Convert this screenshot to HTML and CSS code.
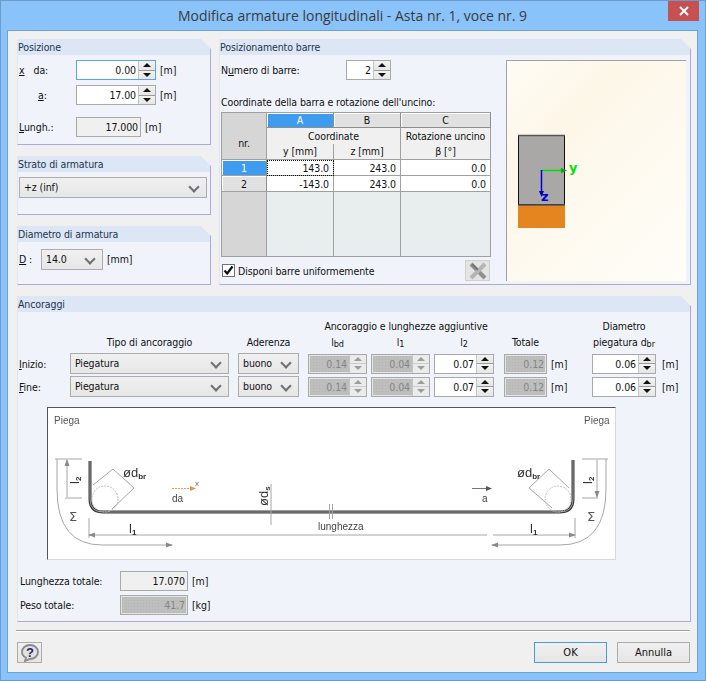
FILE: index.html
```html
<!DOCTYPE html>
<html lang="it">
<head>
<meta charset="utf-8">
<title>Modifica armature longitudinali</title>
<link rel="stylesheet" href="styles.css">
</head>
<body>
<div class="window">
  <header class="titlebar">
    <span class="title">Modifica armature longitudinali - Asta nr. 1, voce nr. 9</span>
    <span class="close"><svg width="10" height="10" viewBox="0 0 10 10"><path d="M1 1L9 9M9 1L1 9" stroke="#fff" stroke-width="2"/></svg></span>
  </header>
  <main class="client">
    <div class="top">
      <div class="leftcol">
        <section class="panel p-pos">
          <h2 class="phead">Posizione</h2>
          <div class="pbody pos-body">
            <div class="row r-da">
              <span class="lab lab-x"><u>x</u><span class="da">da:</span></span>
              <div class="field spin w80 focus"><span class="val">0.00</span><span class="btns"><i class="up"></i><i class="dn"></i></span></div>
              <span class="unit">[m]</span>
            </div>
            <div class="row r-a">
              <span class="lab lab-a"><u>a</u>:</span>
              <div class="field spin w80"><span class="val">17.00</span><span class="btns"><i class="up"></i><i class="dn"></i></span></div>
              <span class="unit">[m]</span>
            </div>
            <div class="row r-l">
              <span class="lab"><u>L</u>ungh.:</span>
              <div class="field ro w65"><span class="val">17.000</span></div>
              <span class="unit">[m]</span>
            </div>
          </div>
        </section>
        <section class="panel p-small">
          <h2 class="phead">Strato di armatura</h2>
          <div class="pbody strato-body">
            <div class="select w188">+z (inf)</div>
          </div>
        </section>
        <section class="panel p-small">
          <h2 class="phead">Diametro di armatura</h2>
          <div class="pbody diam-body">
            <span class="lab lab-d"><u>D</u> :</span>
            <div class="select w62">14.0</div>
            <span class="unit">[mm]</span>
          </div>
        </section>
      </div>
      <section class="panel p-bars">
        <h2 class="phead">Posizionamento barre</h2>
        <div class="pbody bars-body">
          <div class="bars-main">
            <div class="row r-num">
              <span class="lab lab-num">N<u>u</u>mero di barre:</span>
              <div class="field spin w45"><span class="val">2</span><span class="btns"><i class="up"></i><i class="dn"></i></span></div>
            </div>
            <p class="coord-label">Coordinate della barra e rotazione dell'uncino:</p>
            <table class="grid">
              <colgroup><col class="c-nr"><col class="c-ab"><col class="c-ab"><col class="c-c"></colgroup>
              <tr class="h-letters"><th class="corner"></th><th class="hbtn sel">A</th><th class="hbtn">B</th><th class="hbtn">C</th></tr>
              <tr class="h-sub"><th class="corner nr" rowspan="2">nr.</th><th colspan="2" class="h-top">Coordinate</th><th class="h-top">Rotazione uncino</th></tr>
              <tr class="h-sub"><th class="h-bot">y [mm]</th><th class="h-bot">z [mm]</th><th class="h-bot">β [°]</th></tr>
              <tr class="data"><th class="rbtn sel">1</th><td class="cur">143.0</td><td>243.0</td><td>0.0</td></tr>
              <tr class="data"><th class="rbtn">2</th><td>-143.0</td><td>243.0</td><td>0.0</td></tr>
              <tr class="empty"><th class="corner"></th><td></td><td></td><td></td></tr>
            </table>
            <div class="check-row">
              <label class="check"><span class="box"><svg width="11" height="11" viewBox="0 0 11 11"><path d="M1.5 5.5L4.2 8.5L9.5 1.5" fill="none" stroke="#111" stroke-width="2.2"/></svg></span>Disponi barre uniformemente</label>
              <span class="xbtn"><svg width="18" height="18" viewBox="0 0 18 18"><path d="M2 2L16 16" stroke="#8f8f8f" stroke-width="4"/><path d="M16 2L2 16" stroke="#b5b5b5" stroke-width="4"/><path d="M3 2L9 8" stroke="#6f6f6f" stroke-width="1.5"/></svg></span>
            </div>
          </div>
          <div class="preview">
            <svg width="180" height="221" viewBox="506 60 180 221">
              <rect x="518" y="205" width="47" height="23" fill="#e5851f"/>
              <rect x="518.5" y="135.5" width="46" height="69" fill="#a9a8a6" stroke="#111"/>
              <path d="M518 135.500H565M518 205H565" stroke="#555" stroke-width="1.500"/>
              <path d="M541 170.500H565" stroke="#00e000" stroke-width="1.500"/>
              <path d="M561 168L567 170.500L561 173Z" fill="#00b000"/>
              <path d="M541.500 170V194" stroke="#0000e0" stroke-width="1.500"/>
              <path d="M539 191L541.500 197L544 191Z" fill="#0000a0"/>
              <text x="569" y="172" class="axis ay">y</text>
              <text x="541" y="201" class="axis az">z</text>
            </svg>
          </div>
        </div>
      </section>
    </div>
    <section class="panel p-anch">
      <h2 class="phead">Ancoraggi</h2>
      <div class="pbody anch-body">
        <div class="agrid">
          <span class="h1 span3 g-extra">Ancoraggio e lunghezze aggiuntive</span>
          <span class="h1 g-diam">Diametro</span>
          <span class="h2 g-tipo">Tipo di ancoraggio</span>
          <span class="h2 g-ader">Aderenza</span>
          <span class="h2 g-lbd">l<small>bd</small></span>
          <span class="h2 g-l1">l<small>1</small></span>
          <span class="h2 g-l2">l<small>2</small></span>
          <span class="h2 g-tot">Totale</span>
          <span class="h2 g-dbr">piegatura d<small>br</small></span>

          <span class="lab r3"><u>I</u>nizio:</span>
          <div class="select w159 r3">Piegatura</div>
          <div class="select w61 r3">buono</div>
          <div class="field spin dis w59 r3"><span class="val">0.14</span><span class="btns"><i class="up"></i><i class="dn"></i></span></div>
          <div class="field spin dis w59 r3"><span class="val">0.04</span><span class="btns"><i class="up"></i><i class="dn"></i></span></div>
          <div class="field spin w60 r3"><span class="val">0.07</span><span class="btns"><i class="up"></i><i class="dn"></i></span></div>
          <div class="cellrow r3"><div class="field dis w43"><span class="val">0.12</span></div><span class="unit">[m]</span></div>
          <div class="cellrow r3"><div class="field spin w64"><span class="val">0.06</span><span class="btns"><i class="up"></i><i class="dn"></i></span></div><span class="unit u6">[m]</span></div>

          <span class="lab r4"><u>F</u>ine:</span>
          <div class="select w159 r4">Piegatura</div>
          <div class="select w61 r4">buono</div>
          <div class="field spin dis w59 r4"><span class="val">0.14</span><span class="btns"><i class="up"></i><i class="dn"></i></span></div>
          <div class="field spin dis w59 r4"><span class="val">0.04</span><span class="btns"><i class="up"></i><i class="dn"></i></span></div>
          <div class="field spin w60 r4"><span class="val">0.07</span><span class="btns"><i class="up"></i><i class="dn"></i></span></div>
          <div class="cellrow r4"><div class="field dis w43"><span class="val">0.12</span></div><span class="unit">[m]</span></div>
          <div class="cellrow r4"><div class="field spin w64"><span class="val">0.06</span><span class="btns"><i class="up"></i><i class="dn"></i></span></div><span class="unit u6">[m]</span></div>
        </div>

        <div class="diagram">
          <svg width="569" height="153" viewBox="47 406 569 153">
            <defs>
              <marker id="ah" markerWidth="7" markerHeight="6" refX="6" refY="3" orient="auto-start-reverse"><path d="M0 0.500L7 3L0 5.500Z" fill="#8a8a8a"/></marker>
              <marker id="oh" markerWidth="6" markerHeight="6" refX="5" refY="3" orient="auto"><path d="M0 0.500L6 3L0 5.500Z" fill="#e0935a"/></marker>
              <marker id="bh" markerWidth="6" markerHeight="6" refX="5" refY="3" orient="auto"><path d="M0 0.500L6 3L0 5.500Z" fill="#555"/></marker>
            </defs>
            <path class="bar" d="M90 460V498Q90 511 103 511H560Q573 511 573 498V459"/>
            <path class="bar-in" d="M90 460V498Q90 511 103 511H560Q573 511 573 498V459"/>
            <g class="dim">
              <path d="M55 458H82M65 497H82M582 458H608M582 497H598"/>
              <path d="M67 459V496M597 459V496" marker-start="url(#ah)" marker-end="url(#ah)"/>
              <path d="M57 458V488Q57 544 102 544H172" marker-end="url(#ah)"/>
              <path d="M606 458V488Q606 544 560 544H492" marker-end="url(#ah)"/>
              <path d="M89 517V537M575 517V537"/>
              <path d="M89 534H173M493 534H575" marker-start="url(#ah)" marker-end="url(#ah)"/>
              <path d="M173 534H487"/>
              <path d="M93 484L113 468L134 487L112 508"/>
              <path d="M569 487L549 468L529 487L552 507"/>
              <circle cx="105" cy="498" r="13" class="dash"/>
              <circle cx="558" cy="498" r="13" class="dash"/>
              <path d="M271 483V524M329.500 503V518M332.500 503V518"/>
            </g>
            <path d="M172 487.500H195" class="orange" marker-end="url(#oh)"/>
            <path d="M472 487.500H491" class="darkline" marker-end="url(#bh)"/>
            <text class="d-lab" x="54" y="423">Piega</text>
            <text class="d-lab" x="584" y="423">Piega</text>
            <text class="d-txt" x="172" y="501">da</text>
            <text class="d-sm" x="195" y="485">x</text>
            <text class="d-txt" x="482" y="501">a</text>
            <text class="d-txt" x="318" y="529">lunghezza</text>
            <text class="d-big" x="123" y="476">ød<tspan class="d-s" dy="2">br</tspan></text>
            <text class="d-big" x="517" y="476">ød<tspan class="d-s" dy="2">br</tspan></text>
            <text class="d-big" x="129" y="532">l<tspan class="d-s" dy="2">1</tspan></text>
            <text class="d-big" x="530" y="532">l<tspan class="d-s" dy="2">1</tspan></text>
            <text class="d-big" transform="translate(79 483) rotate(-90)">l<tspan class="d-s" dy="2">2</tspan></text>
            <text class="d-big" transform="translate(592 483) rotate(-90)">l<tspan class="d-s" dy="2">2</tspan></text>
            <text class="d-big" transform="translate(268 505) rotate(-90)">ød<tspan class="d-s" dy="2">s</tspan></text>
            <text class="d-sig" x="69" y="520">Σ</text>
            <text class="d-sig" x="587" y="520">Σ</text>
          </svg>
        </div>

        <div class="totals">
          <div class="row r-tot"><span class="lab lab-t">Lunghezza totale:</span><div class="field ro w68"><span class="val">17.070</span></div><span class="unit">[m]</span></div>
          <div class="row r-tot"><span class="lab lab-t">Peso totale:</span><div class="field dis w68"><span class="val">41.7</span></div><span class="unit">[kg]</span></div>
        </div>
      </div>
    </section>
    <hr class="sep">
    <footer class="actions">
      <button class="btn help" type="button" aria-label="Aiuto"><svg width="20" height="18" viewBox="0 0 20 18"><path d="M10 1C14.500 1 18 4 18 8C18 12 14.500 15 10 15L5 17L6 13.800C3.500 12.500 2 10.500 2 8C2 4 5.500 1 10 1Z" fill="#e2e2e2" stroke="#8a8a8a" stroke-width="1.800"/><text x="10" y="13" class="q">?</text></svg></button>
      <div class="spacer"></div>
      <button class="btn ok" type="button">OK</button>
      <button class="btn" type="button">Annulla</button>
    </footer>
  </main>
</div>
</body>
</html>
```

FILE: styles.css
```css
* { box-sizing: border-box; }
html, body { margin: 0; padding: 0; }
body { width: 706px; height: 681px; overflow: hidden; font: 10.5px/14px "DejaVu Sans Condensed", "DejaVu Sans", sans-serif; letter-spacing: -0.1px; color: #111; }
.window { width: 706px; height: 681px; background: #8ac3f9; border: 1px solid #6b9ccb; padding: 0 7px 7px 6px; display: flex; flex-direction: column; }
.titlebar { height: 29px; flex: none; display: flex; justify-content: center; align-items: center; position: relative; }
.title { font: 14px/20px "Open Sans", "Noto Sans", sans-serif; letter-spacing: 0; color: #3a3a3a; padding-top: 1px; }
.close { position: absolute; right: -1px; top: 0; width: 31px; height: 20px; background: #c75050; display: flex; align-items: center; justify-content: center; }
.client { flex: 1; background: #f0f0f0; border: 1px solid #6ea3d6; padding: 8px 6px 8px 9px; display: flex; flex-direction: column; }
.top { display: flex; gap: 8px; height: 246px; flex: none; }
.leftcol { width: 194px; display: flex; flex-direction: column; gap: 11px; }

.panel { display: flex; flex-direction: column; background: #f0f4fa; border-right: 1px solid #aaa8e8; border-bottom: 1px solid #aaa8e8; border-left: 1px solid #dfe7f4; clip-path: polygon(0 0, calc(100% - 10px) 0, 100% 10px, 100% 100%, 0 100%); }
.phead { margin: 0; height: 16px; flex: none; background: #dce6f4; font: 10.5px/16px "DejaVu Sans Condensed", "DejaVu Sans", sans-serif; color: #1e3550; white-space: nowrap; }
.pbody { flex: 1; min-height: 0; }
.p-pos { height: 106px; }
.p-small { height: 59px; }
.p-bars { width: 472px; }
.p-anch { height: 326px; margin-top: 11px; flex: none; }

.row { display: flex; align-items: center; }
.lab { display: inline-block; white-space: nowrap; }
.unit { white-space: nowrap; margin-left: 4px; }
.pos-body { padding: 5px 0 0 1px; }
.pos-body .lab { width: 57px; }
.r-da, .r-a { height: 20px; }
.r-a { margin-top: 5px; }
.r-l { height: 20px; margin-top: 12px; }
.lab-x .da { margin-left: 9px; }
.lab-a { padding-left: 19px; }
.strato-body { padding: 5px 0 0 1px; }
.diam-body { padding: 7px 0 0 1px; display: flex; align-items: flex-start; line-height: 21px; }
.lab-d { width: 22px; }

.field { height: 20px; border: 1px solid #a9a9a9; background: #fff; display: flex; align-items: stretch; flex: none; }
.val { flex: 1; text-align: right; padding-right: 2px; line-height: 18px; white-space: nowrap; }
.focus { border-color: #5aa4ea; }
.ro { background: #f0f0f0; }
.dis { background-color: #bebebe; background-image: radial-gradient(#b4b4b4 0.6px, transparent 0.8px); background-size: 3px 3px; color: #858585; box-shadow: inset 0 0 0 1px #e4e4e4; }
.btns { width: 17px; display: flex; flex-direction: column; border-left: 1px solid #c4c4c4; background: #f0f0f0; }
.btns i { flex: 1; display: flex; align-items: center; justify-content: center; background: linear-gradient(#f2f2f2, #e6e6e6); }
.btns .up { border-bottom: 1px solid #9a9a9a; }
.btns i::before { content: ""; border-left: 4px solid transparent; border-right: 4px solid transparent; }
.btns .up::before { border-bottom: 4px solid #111; }
.btns .dn::before { border-top: 4px solid #111; }
.dis .btns { background: #e8e8e8; }
.dis .btns i { background: #ebebeb; }
.dis .btns .up { border-bottom-color: #ccc; }
.dis .btns .up::before { border-bottom-color: #9c9c9c; }
.dis .btns .dn::before { border-top-color: #9c9c9c; }
.w80 { width: 80px; }
.w65 { width: 65px; }
.w45 { width: 45px; }
.w59 { width: 59px; }
.w60 { width: 60px; }
.w43 { width: 43px; }
.w64 { width: 64px; }
.w68 { width: 68px; }

.select { height: 21px; border: 1px solid #acacac; background: linear-gradient(#f0f0f0, #e6e6e6); line-height: 19px; padding-left: 4px; position: relative; flex: none; white-space: nowrap; }
.select::after { content: ""; position: absolute; right: 8px; top: 5px; width: 6px; height: 6px; border-right: 2px solid #707070; border-bottom: 2px solid #707070; transform: rotate(45deg); }
.w188 { width: 188px; }
.w62 { width: 62px; }
.w159 { width: 159px; }
.w61 { width: 61px; }

.bars-body { display: flex; padding: 5px 0 0 1px; }
.bars-main { width: 270px; }
.r-num { height: 20px; }
.lab-num { width: 125px; }
.coord-label { margin: 15px 0 3px; line-height: 14px; white-space: nowrap; }
.grid { table-layout: fixed; width: 269px; border-collapse: collapse; border: 1px solid #a0a0a0; }
.c-nr { width: 45px; }
.c-ab { width: 67px; }
.c-c { width: 90px; }
.grid th, .grid td { padding: 0; font-weight: normal; }
.h-letters { height: 15px; }
.h-letters th { line-height: 13px; }
.h-sub { height: 16px; }
.corner { background: #d6d6d6; border-right: 1px solid #a0a0a0; }
.nr { border-bottom: 1px solid #a0a0a0; }
.hbtn { background: #e1e1e1; border-right: 1px solid #8e8e8e; border-bottom: 1px solid #8e8e8e; box-shadow: inset 1px 1px 0 #fff; }
.hbtn.sel, .rbtn.sel { background: #3d9bf0; color: #fff; box-shadow: inset 1px 1px 0 #fff; }
.h-top, .h-bot { background: #f0f0f0; border-right: 1px solid #a0a0a0; line-height: 14px; }
.h-bot { border-bottom: 1px solid #a0a0a0; }
.data { height: 16px; }
.data td { background: #fff; text-align: right; padding-right: 4px; border-right: 1px solid #a0a0a0; border-bottom: 1px solid #a0a0a0; line-height: 14px; }
.rbtn { background: #e1e1e1; border-right: 1px solid #8e8e8e; border-bottom: 1px solid #a0a0a0; box-shadow: inset 1px 1px 0 #fff; }
.cur { outline: 1px dotted #111; outline-offset: -1px; }
.empty { height: 65px; }
.empty td { background: #e8eeee; border-right: 1px solid #a0a0a0; }
.check-row { display: flex; align-items: center; height: 27px; position: relative; }
.check { display: flex; align-items: center; white-space: nowrap; flex: 1; }
.box { width: 13px; height: 13px; border: 1px solid #707070; background: #fff; margin: 0 3px 0 1px; display: flex; align-items: center; justify-content: center; }
.xbtn { width: 25px; height: 21px; background: #e4e4e4; border: 1px solid #d0d0d0; display: flex; align-items: center; justify-content: center; margin-right: 1px; }
.preview { width: 180px; height: 221px; margin-left: 15px; border-top: 1px solid #a0a0a0; border-left: 1px solid #a0a0a0; background: linear-gradient(135deg, #fffcf4 0%, #fdf7e8 30%, #fefaf0 60%, #fffdf9 100%); overflow: hidden; flex: none; }
.preview svg { display: block; margin: -1px 0 0 -1px; }
.axis { font: bold 13px "DejaVu Sans", sans-serif; }
.ay { fill: #00e000; }
.az { fill: #0000e0; }

.anch-body { padding: 7px 0 0 1px; }
.agrid { display: grid; grid-template-columns: 51px 168px 70px 63px 63px 70px 88px 98px; grid-template-rows: 14px 18px 25px 21px; align-items: center; }
.agrid .h1, .agrid .h2 { text-align: center; white-space: nowrap; }
.agrid small { font-size: 9px; position: relative; top: 1px; }
.r3 { grid-row: 3; }
.r4 { grid-row: 4; }
.span3 { grid-column: 4 / 7; grid-row: 1; }
.g-diam { grid-column: 8; grid-row: 1; justify-self: start; width: 64px; }
.g-tipo { grid-column: 2; grid-row: 2; justify-self: start; width: 159px; }
.g-ader { grid-column: 3; grid-row: 2; justify-self: start; width: 61px; }
.g-lbd { grid-column: 4; grid-row: 2; justify-self: start; width: 59px; }
.g-l1 { grid-column: 5; grid-row: 2; justify-self: start; width: 59px; }
.g-l2 { grid-column: 6; grid-row: 2; justify-self: start; width: 60px; }
.g-tot { grid-column: 7; grid-row: 2; justify-self: start; width: 43px; }
.g-dbr { grid-column: 8; grid-row: 2; justify-self: start; width: 64px; }
.cellrow { display: flex; align-items: center; }
.u6 { margin-left: 6px; }

.diagram { width: 569px; height: 153px; margin: 10px 0 0 28px; border-top: 1px solid #555; border-left: 1px solid #555; border-right: 1px solid #d8d8d8; border-bottom: 1px solid #d8d8d8; background: #fff; overflow: hidden; }
.diagram svg { display: block; margin: -1px 0 0 -1px; filter: blur(0.3px); letter-spacing: 0; }
.bar { fill: none; stroke: #3a3a3a; stroke-width: 3; }
.bar-in { fill: none; stroke: #9a9a9a; stroke-width: 1; }
.dim path { fill: none; stroke: #a6a6a6; stroke-width: 1; }
.dash { fill: none; stroke: #bdbdbd; stroke-width: 1; stroke-dasharray: 2 1; }
.orange { stroke: #ef9a5c; stroke-width: 1; stroke-dasharray: 2 1; fill: none; }
.darkline { stroke: #777; stroke-width: 1; fill: none; }
.d-lab { font: 10px "Liberation Sans", sans-serif; fill: #555; }
.d-txt { font: 10px "Liberation Sans", sans-serif; fill: #444; }
.d-sm { font: 8px "Liberation Sans", sans-serif; fill: #666; }
.d-big { font: 13px "Liberation Sans", sans-serif; fill: #333; }
.d-s { font: bold 8px "Liberation Sans", sans-serif; }
.d-sig { font: 13px "DejaVu Sans", sans-serif; fill: #555; }

.totals { padding: 11px 0 0 1px; }
.r-tot { height: 20px; margin-bottom: 4px; }
.lab-t { width: 100px; }

.sep { margin: 8px 0 0 -1px; width: 674px; height: 2px; border: 0; border-top: 1px solid #a0a0a0; border-bottom: 1px solid #fff; flex: none; }
.actions { display: flex; margin: 10px 1px 0 0; gap: 10px; flex: none; height: 21px; }
.spacer { flex: 1; }
.btn { width: 73px; height: 21px; padding: 0; border: 1px solid #acacac; background: linear-gradient(#f0f0f0, #e5e5e5); font: 11px/17px "DejaVu Sans Condensed", "DejaVu Sans", sans-serif; color: #111; display: flex; align-items: center; justify-content: center; }
.help { width: 25px; }
.ok { border-color: #4a9ae6; }
.q { font: bold 13px "Liberation Sans", sans-serif; fill: #23235f; text-anchor: middle; }
```
